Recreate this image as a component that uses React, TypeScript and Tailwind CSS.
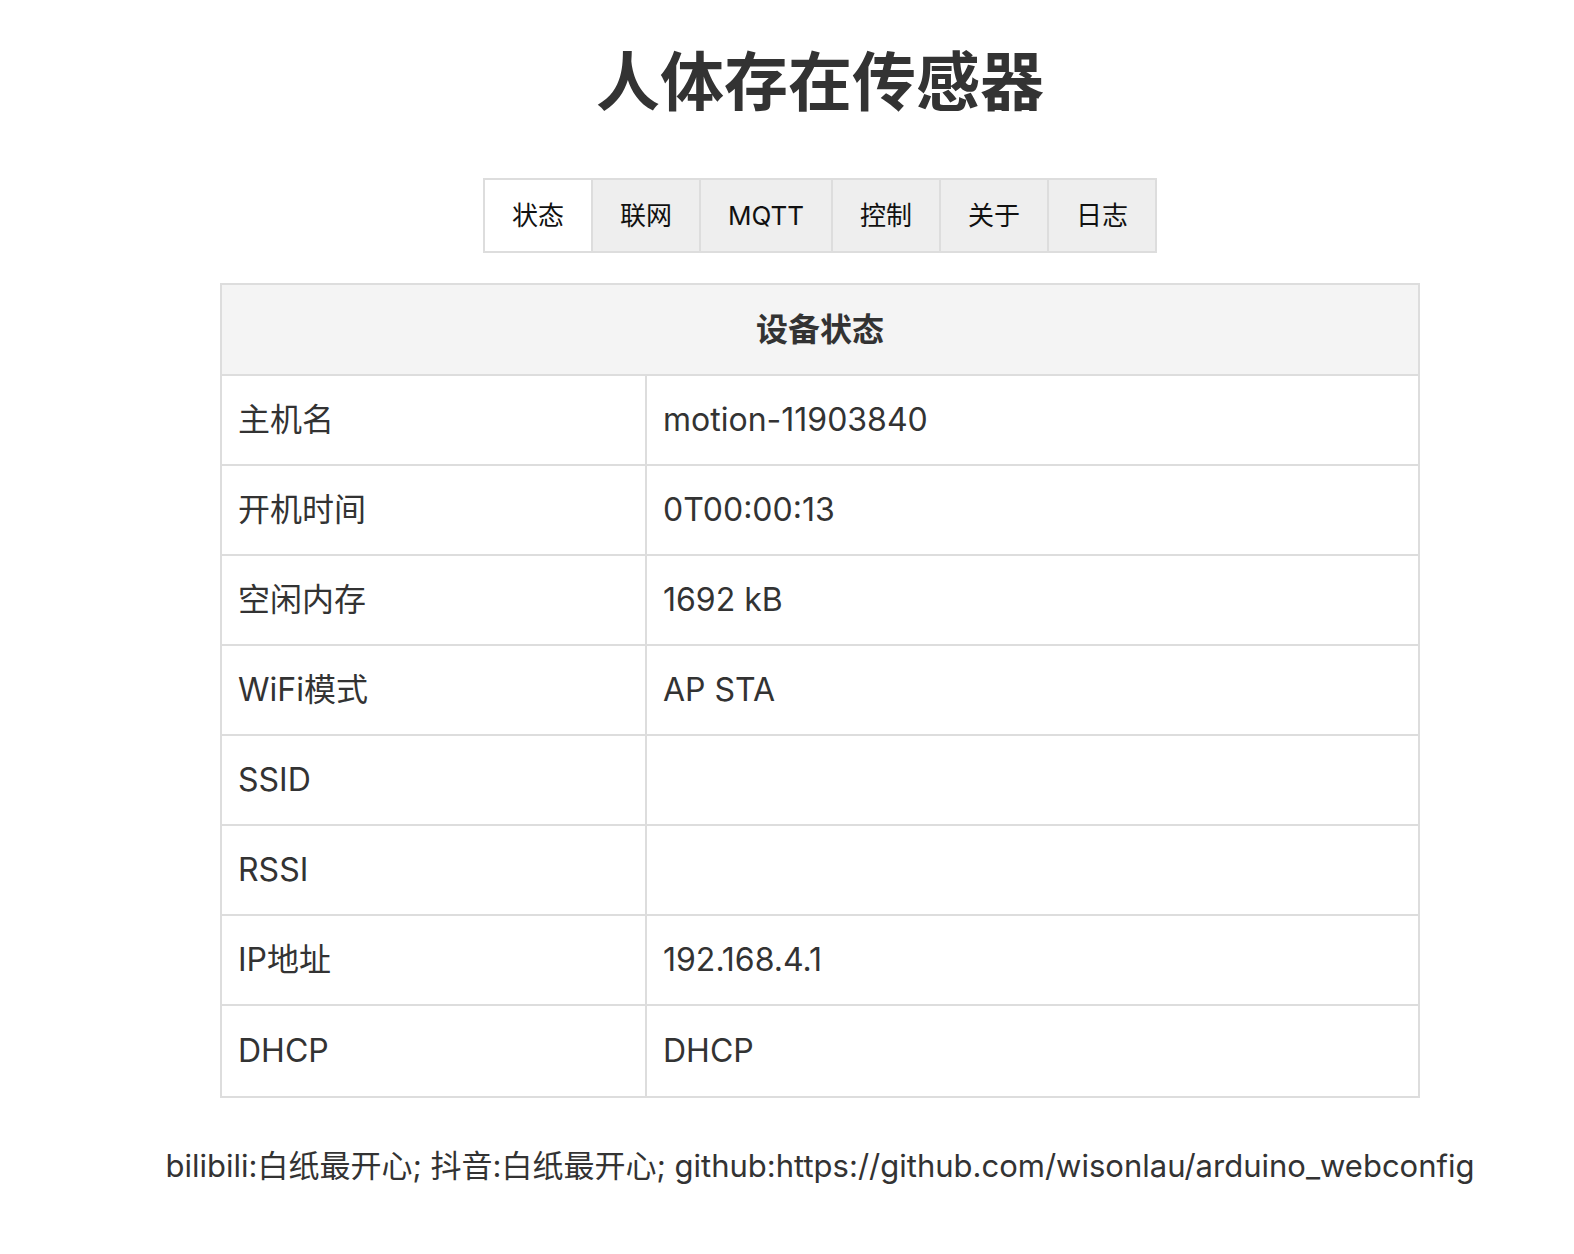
const tabs = ["状态", "联网", "MQTT", "控制", "关于", "日志"];

const rows: [string, string][] = [
  ["主机名", "motion-11903840"],
  ["开机时间", "0T00:00:13"],
  ["空闲内存", "1692 kB"],
  ["WiFi模式", "AP STA"],
  ["SSID", ""],
  ["RSSI", ""],
  ["IP地址", "192.168.4.1"],
  ["DHCP", "DHCP"],
];

export default function App() {
  return (
    <div
      className="min-h-[1254px] bg-white pl-[66px] text-[#333]"
      style={{ fontFamily: 'Inter, "Noto Sans CJK SC", sans-serif' }}
    >
      <div className="flex flex-col items-center">
        <h1 className="mt-[42px] h-[80px] text-[64px] leading-[80px] font-bold text-[#333]">
          人体存在传感器
        </h1>

        <div className="mt-[56px] flex border-2 border-[#ddd]">
          {tabs.map((t, i) => (
            <div
              key={t}
              className={`flex h-[71px] items-center justify-center px-[27px] text-[26px] text-[#111] ${
                i === 0 ? "bg-white" : "border-l-2 border-[#ddd] bg-[#eee]"
              }`}
            >
              {t}
            </div>
          ))}
        </div>

        {/* status table */}
        <div className="mt-[30px] w-[1200px] border-2 border-[#ddd] text-[32px]">
          <div className="flex h-[91px] items-center justify-center border-b-2 border-[#ddd] bg-[#f4f4f4] font-bold">
            设备状态
          </div>
          {rows.map(([k, v], i) => (
            <div
              key={k}
              className={`flex h-[90px] ${i < rows.length - 1 ? "border-b-2 border-[#ddd]" : ""}`}
            >
              <div className="flex w-[425px] items-center border-r-2 border-[#ddd] px-[16px]">{k}</div>
              <div className="flex flex-1 items-center px-[16px]">{v}</div>
            </div>
          ))}
        </div>

        <p className="mt-[45px] text-[31px] whitespace-nowrap">
          bilibili:白纸最开心; 抖音:白纸最开心; github:https://github.com/wisonlau/arduino_webconfig
        </p>
      </div>
    </div>
  );
}
